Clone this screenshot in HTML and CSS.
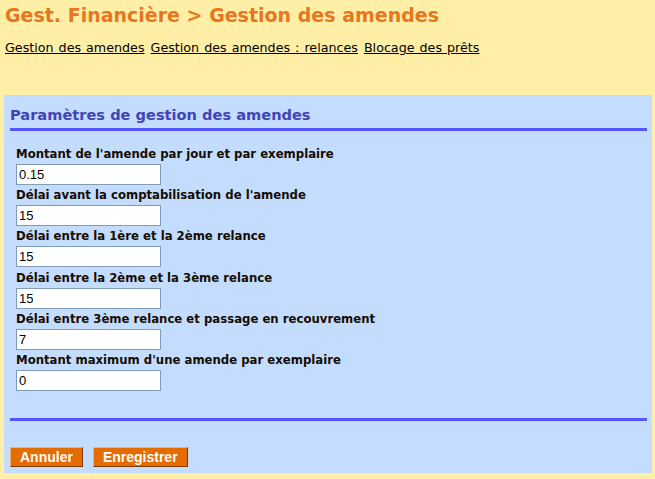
FILE: index.html
```html
<!DOCTYPE html>
<html lang="fr">
<head>
<meta charset="utf-8">
<title>Gestion des amendes</title>
<link rel="stylesheet" href="styles.css">
</head>
<body>
<header class="top">
  <h1 class="title">Gest. Financière &gt; Gestion des amendes</h1>
  <nav class="tabs">
    <a href="#">Gestion des amendes</a>
    <a href="#">Gestion des amendes : relances</a>
    <a href="#">Blocage des prêts</a>
  </nav>
</header>
<main class="panel">
  <h2 class="panel-title">Paramètres de gestion des amendes</h2>
  <form class="fields">
    <label class="field"><span class="label">Montant de l'amende par jour et par exemplaire</span><input class="input" type="text" value="0.15"></label>
    <label class="field"><span class="label">Délai avant la comptabilisation de l'amende</span><input class="input" type="text" value="15"></label>
    <label class="field"><span class="label">Délai entre la 1ère et la 2ème relance</span><input class="input" type="text" value="15"></label>
    <label class="field"><span class="label">Délai entre la 2ème et la 3ème relance</span><input class="input" type="text" value="15"></label>
    <label class="field"><span class="label">Délai entre 3ème relance et passage en recouvrement</span><input class="input" type="text" value="7"></label>
    <label class="field"><span class="label">Montant maximum d'une amende par exemplaire</span><input class="input" type="text" value="0"></label>
  </form>
  <div class="rule"></div>
  <div class="actions">
    <button class="btn" type="button">Annuler</button>
    <button class="btn" type="button">Enregistrer</button>
  </div>
</main>
</body>
</html>
```
FILE: styles.css
```css
html, body {
  margin: 0;
  padding: 0;
}
body {
  background: #ffefa6;
  width: 655px;
  height: 479px;
  overflow: hidden;
  font-family: "DejaVu Sans", Verdana, sans-serif;
  color: #000;
}
.top {
  padding: 0 0 0 5px;
  height: 95px;
  box-sizing: border-box;
}
.title {
  margin: 0;
  padding-top: 3px;
  font-size: 19px;
  line-height: 24px;
  font-weight: bold;
  color: #e8761e;
}
.tabs {
  margin-top: 12px;
  font-size: 12.7px;
  line-height: 18px;
  word-spacing: 1px;
  display: flex;
  gap: 6px;
}
.tabs a {
  color: #000;
  text-decoration: underline;
}
.panel {
  margin: 0 3px 0 4px;
  background: #c4ddff;
  height: 378px;
  padding: 6px 5px 0 6px;
  box-sizing: border-box;
}
.panel-title {
  margin: 0;
  font-size: 14.6px;
  line-height: 26px;
  padding-top: 1px;
  font-weight: bold;
  color: #4343b8;
  border-bottom: 3px solid #5555ff;
  padding-bottom: 0;
}
.fields {
  display: flex;
  flex-direction: column;
  padding: 13px 0 0 6px;
  margin: 0 0 27px;
}
.field {
  display: flex;
  flex-direction: column;
  align-items: flex-start;
  height: 41.2px;
}
.label {
  font-family: "DejaVu Sans Condensed", "DejaVu Sans", sans-serif;
  font-weight: bold;
  font-size: 13px;
  line-height: 20px;
  color: #140c00;
}
.input {
  width: 145px;
  height: 21px;
  box-sizing: border-box;
  border: 1px solid #7f9db9;
  background: #fff;
  font-family: "Liberation Sans", Arial, sans-serif;
  font-size: 13px;
  padding: 0 2px;
  margin: 0;
  color: #000;
}
.rule {
  height: 3px;
  background: #5555ff;
  margin-top: 0;
}
.actions {
  display: flex;
  gap: 10px;
  padding-top: 26px;
}
.btn {
  background: #e46c00;
  color: #fff;
  font-family: "Liberation Sans", Arial, sans-serif;
  font-weight: bold;
  font-size: 14px;
  height: 20px;
  padding: 0 9px;
  border: 1px solid;
  border-color: #f5b070 #7a3a00 #7a3a00 #f5b070;
  line-height: 17px;
  margin: 0;
}
```
